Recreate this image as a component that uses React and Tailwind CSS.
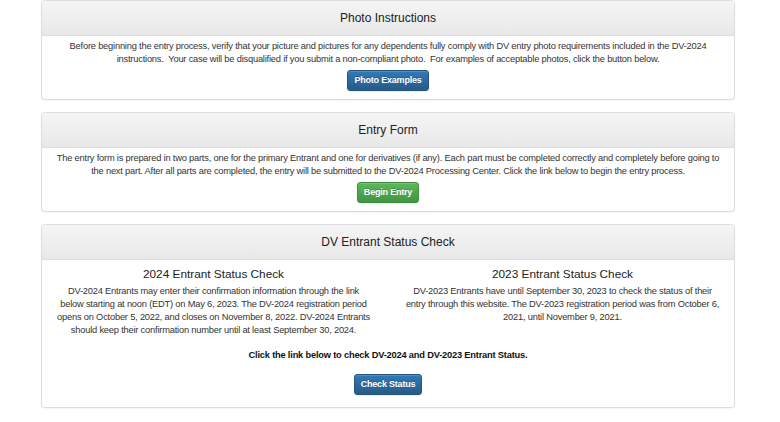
function Panel({ title, children }) {
  return (
    <div className="mb-[12px] rounded-[4px] border border-[#dddddd] bg-white shadow-[0_1px_1px_rgba(0,0,0,0.04)]">
      <div className="flex h-[35px] items-center justify-center rounded-t-[4px] border-b border-[#dddddd] bg-gradient-to-b from-[#f5f5f5] to-[#e8e8e8] text-[12px] tracking-normal text-[#222]">
        {title}
      </div>
      <div className="px-[12px] pt-[4px] pb-[8px] text-center">{children}</div>
    </div>
  );
}

function Btn({ color, children }) {
  const styles =
    color === "green"
      ? "border-[#3e8f3e] from-[#5cb85c] to-[#419641]"
      : "border-[#245580] from-[#337ab7] to-[#265a88]";
  return (
    <button
      className={`h-[21px] rounded-[3px] border bg-gradient-to-b px-[6px] text-[9px] font-bold tracking-[-0.2px] text-white shadow-[inset_0_1px_0_rgba(255,255,255,0.15),0_1px_1px_rgba(0,0,0,0.08)] [text-shadow:0_-1px_0_rgba(0,0,0,0.2)] ${styles}`}
    >
      {children}
    </button>
  );
}

export default function App() {
  return (
    <div
      className="min-h-screen bg-white px-[41px] text-[9.3px] leading-[13px] tracking-[-0.2px] text-[#333]"
      style={{ fontFamily: '"Liberation Sans", Arial, sans-serif' }}
    >
      <div className="w-[694px]">
        {/* Photo Instructions */}
        <Panel title="Photo Instructions">
          <p>
            Before beginning the entry process, verify that your picture and pictures for any dependents fully comply with DV entry photo requirements included in the DV-2024 instructions.&nbsp; Your case will be disqualified if you submit a non-compliant photo.&nbsp; For examples of acceptable photos, click the button below.
          </p>
          <div className="mt-[4px]">
            <Btn>Photo Examples</Btn>
          </div>
        </Panel>

        {/* Entry Form */}
        <Panel title="Entry Form">
          <p>
            The entry form is prepared in two parts, one for the primary Entrant and one for derivatives (if any). Each part must be completed correctly and completely before going to the next part. After all parts are completed, the entry will be submitted to the DV-2024 Processing Center. Click the link below to begin the entry process.
          </p>
          <div className="mt-[4px]">
            <Btn color="green">Begin Entry</Btn>
          </div>
        </Panel>

        {/* Status Check */}
        <Panel title="DV Entrant Status Check">
          <div className="mt-[2px] grid grid-cols-2 gap-[30px]">
            <div className="px-[2px]">
              <h3 className="mb-[3px] text-[11.8px] leading-[16px] tracking-normal text-[#222]">2024 Entrant Status Check</h3>
              <p>
                DV-2024 Entrants may enter their confirmation information through the link below starting at noon (EDT) on May 6, 2023. The DV-2024 registration period opens on October 5, 2022, and closes on November 8, 2022. DV-2024 Entrants should keep their confirmation number until at least September 30, 2024.
              </p>
            </div>
            <div>
              <h3 className="mb-[3px] text-[11.8px] leading-[16px] tracking-normal text-[#222]">2023 Entrant Status Check</h3>
              <p>
                DV-2023 Entrants have until September 30, 2023 to check the status of their entry through this website. The DV-2023 registration period was from October 6, 2021, until November 9, 2021.
              </p>
            </div>
          </div>
          <p className="mt-[12px] font-bold text-[#111]">
            Click the link below to check DV-2024 and DV-2023 Entrant Status.
          </p>
          <div className="mt-[12px] mb-[4px]">
            <Btn>Check Status</Btn>
          </div>
        </Panel>
      </div>
    </div>
  );
}
